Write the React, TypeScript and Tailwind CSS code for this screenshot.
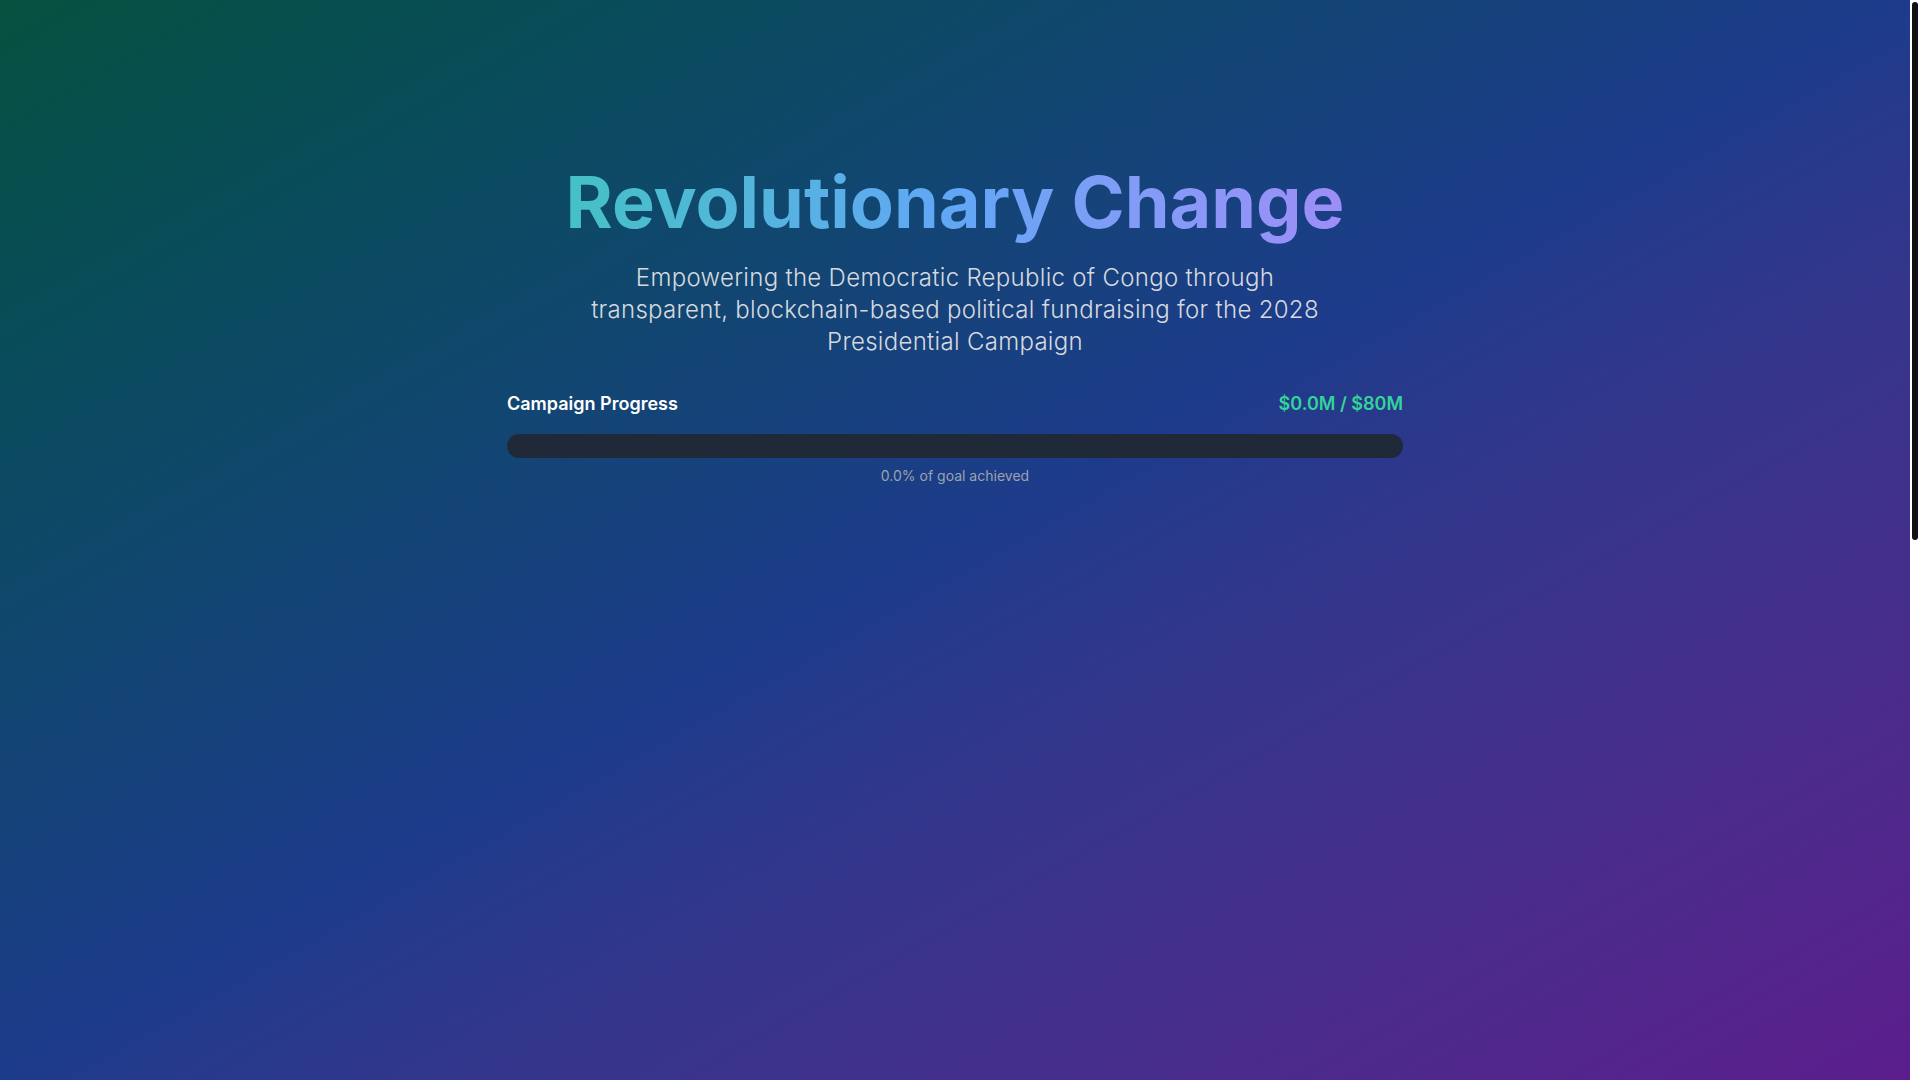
import React from "react";

const raised = 0;
const goal = 80;

function ProgressBar() {
	const pct = (raised / goal) * 100;

	return (
		<div className="mx-auto w-full max-w-4xl">
			<div className="mb-4 flex items-center justify-between text-lg">
				<span className="font-semibold text-white">Campaign Progress</span>
				<span className="font-semibold text-[#34d399]">
					${raised.toFixed(1)}M / ${goal}M
				</span>
			</div>
			<div className="h-6 w-full overflow-hidden rounded-full bg-[#1f2937]">
				<div
					className="h-full rounded-full bg-gradient-to-r from-emerald-400 to-blue-500"
					style={{ width: `${pct}%` }}
				/>
			</div>
			<p className="mt-2 text-center text-sm text-[#9ca3af]">
				{pct.toFixed(1)}% of goal achieved
			</p>
		</div>
	);
}

// page scrollbar as it shows in the shot
function Scrollbar() {
	return (
		<div className="flex w-2.5 shrink-0 justify-center bg-white pt-0.5">
			<div className="h-[538px] w-1.5 rounded-full bg-[#111111]" />
		</div>
	);
}

export default function App() {
	return (
		<div className="flex h-screen overflow-hidden font-['Inter',sans-serif]">
			<main className="flex-1 overflow-hidden bg-gradient-to-br from-[#06513f] via-[#1d3b8b] to-[#5b1d8c]">
				<section className="px-6 pt-[166px] text-center">
					<h1 className="mb-6 text-7xl leading-none font-bold">
						<span className="bg-gradient-to-r from-[#45c1c4] via-[#62a6f6] to-[#9d8ef7] bg-clip-text text-transparent">
							Revolutionary Change
						</span>
					</h1>
					<p className="mx-auto mb-8 max-w-3xl text-2xl font-light tracking-[0.3px] text-[#d6d9df]">
						Empowering the Democratic Republic of Congo through transparent,
						blockchain-based political fundraising for the 2028 Presidential
						Campaign
					</p>
					<ProgressBar />
				</section>
			</main>
			<Scrollbar />
		</div>
	);
}
